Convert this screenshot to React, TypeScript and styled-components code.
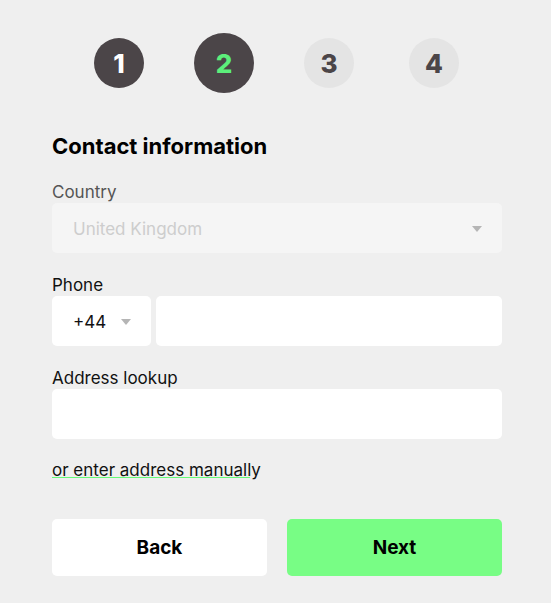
import { FunctionComponent } from 'react';
import styled, { createGlobalStyle } from 'styled-components';

const steps = [1, 2, 3, 4];
const currentStep = 2;

const Caret = () => (
  <svg width="10" height="6" viewBox="0 0 10 6">
    <path d="M0 0 L10 0 L5 6 Z" fill="#b5b5b5" />
  </svg>
);

const App: FunctionComponent = () => {
  return (
    <Page>
      <GlobalStyle />
      <Stepper>
        {
          steps.map((step) => (
            <StepSlot key={ `step-${ step }` }>
              <Step
                active={ step === currentStep }
                done={ step < currentStep }>
                { step }
              </Step>
            </StepSlot>
          ))
        }
      </Stepper>

      <Form>
        <Title>Contact information</Title>

        <Field>
          <Label muted>Country</Label>
          <Select disabled>
            <SelectValue disabled>United Kingdom</SelectValue>
            <Caret />
          </Select>
        </Field>

        <Field>
          <Label>Phone</Label>
          <PhoneRow>
            <CodeSelect>
              <SelectValue>+44</SelectValue>
              <Caret />
            </CodeSelect>
            <PhoneInput />
          </PhoneRow>
        </Field>

        <Field>
          <Label>Address lookup</Label>
          <Input />
        </Field>

        <ManualLink>or enter address manually</ManualLink>

        <Buttons>
          <Button>Back</Button>
          <Button primary>Next</Button>
        </Buttons>
      </Form>
    </Page>
  );
};

export default App;

const GlobalStyle = createGlobalStyle`
  html, body {
    margin: 0;
    padding: 0;
    background: #efefef;
  }
  body {
    font-family: Inter, "Liberation Sans", sans-serif;
    color: #111;
  }
  * {
    box-sizing: border-box;
  }
`;

const Page = styled.div`
  width: 551px;
  min-height: 603px;
  background: #efefef;
  padding-top: 33px;
`;

const Stepper = styled.div`
  display: flex;
  justify-content: center;
  gap: 45px;
  height: 60px;
  padding-left: 2px;
`;

const StepSlot = styled.div`
  width: 60px;
  height: 60px;
  display: flex;
  align-items: center;
  justify-content: center;
`;

const Step = styled.div<{ active: boolean, done: boolean }>`
  width: ${ ({ active }) => active ? '60px' : '50px' };
  height: ${ ({ active }) => active ? '60px' : '50px' };
  border-radius: 50%;
  display: flex;
  align-items: center;
  justify-content: center;
  font-size: 26px;
  font-weight: 800;
  background-color: ${ ({ active, done }) => active || done ? '#4b4548' : '#e4e4e4' };
  color: ${ ({ active, done }) => active ? '#5cef7b' : done ? '#ffffff' : '#4b4548' };
`;

const Form = styled.div`
  width: 450px;
  margin-left: 52px;
  padding-top: 38px;
`;

const Title = styled.h2`
  margin: 0 0 21px;
  font-size: 22px;
  font-weight: 700;
  line-height: 30px;
  color: #000;
`;

const Field = styled.div`
  display: flex;
  flex-direction: column;
  margin-bottom: 22px;
`;

const Label = styled.label<{ muted?: boolean }>`
  font-size: 17px;
  line-height: 20px;
  color: ${ ({ muted }) => muted ? '#555' : '#111' };
  margin-bottom: 1px;
`;

const Select = styled.div<{ disabled?: boolean }>`
  height: 50px;
  border-radius: 5px;
  background: ${ ({ disabled }) => disabled ? '#f5f5f5' : '#fff' };
  display: flex;
  align-items: center;
  justify-content: space-between;
  padding: 2px 20px 0 21px;
`;

const CodeSelect = styled(Select)`
  width: 99px;
  flex: none;
`;

const SelectValue = styled.span<{ disabled?: boolean }>`
  font-size: 17px;
  color: ${ ({ disabled }) => disabled ? '#cdcdcd' : '#111' };
`;

const PhoneRow = styled.div`
  display: flex;
  gap: 5px;
`;

const Input = styled.input`
  display: block;
  width: 100%;
  height: 50px;
  border: none;
  border-radius: 5px;
  background: #fff;
  font: inherit;
  padding: 0 20px;
  outline: none;
`;

const PhoneInput = styled(Input)`
  flex: 1;
  width: auto;
  min-width: 0;
`;

const ManualLink = styled.a`
  position: relative;
  display: block;
  width: fit-content;
  font-size: 17px;
  line-height: 20px;
  color: #111;
  cursor: pointer;
  margin-top: -1px;

  &::after {
    content: '';
    position: absolute;
    left: 0;
    right: 11px;
    bottom: 2px;
    height: 1px;
    background: #66fb78;
  }
`;

const Buttons = styled.div`
  display: grid;
  grid-template-columns: 1fr 1fr;
  gap: 20px;
  margin-top: 39px;
`;

const Button = styled.button<{ primary?: boolean }>`
  height: 57px;
  border: none;
  border-radius: 5px;
  font-family: inherit;
  font-size: 19px;
  font-weight: 700;
  color: #000;
  background-color: ${ ({ primary }) => primary ? '#78fd85' : '#fff' };
  cursor: pointer;
`;
